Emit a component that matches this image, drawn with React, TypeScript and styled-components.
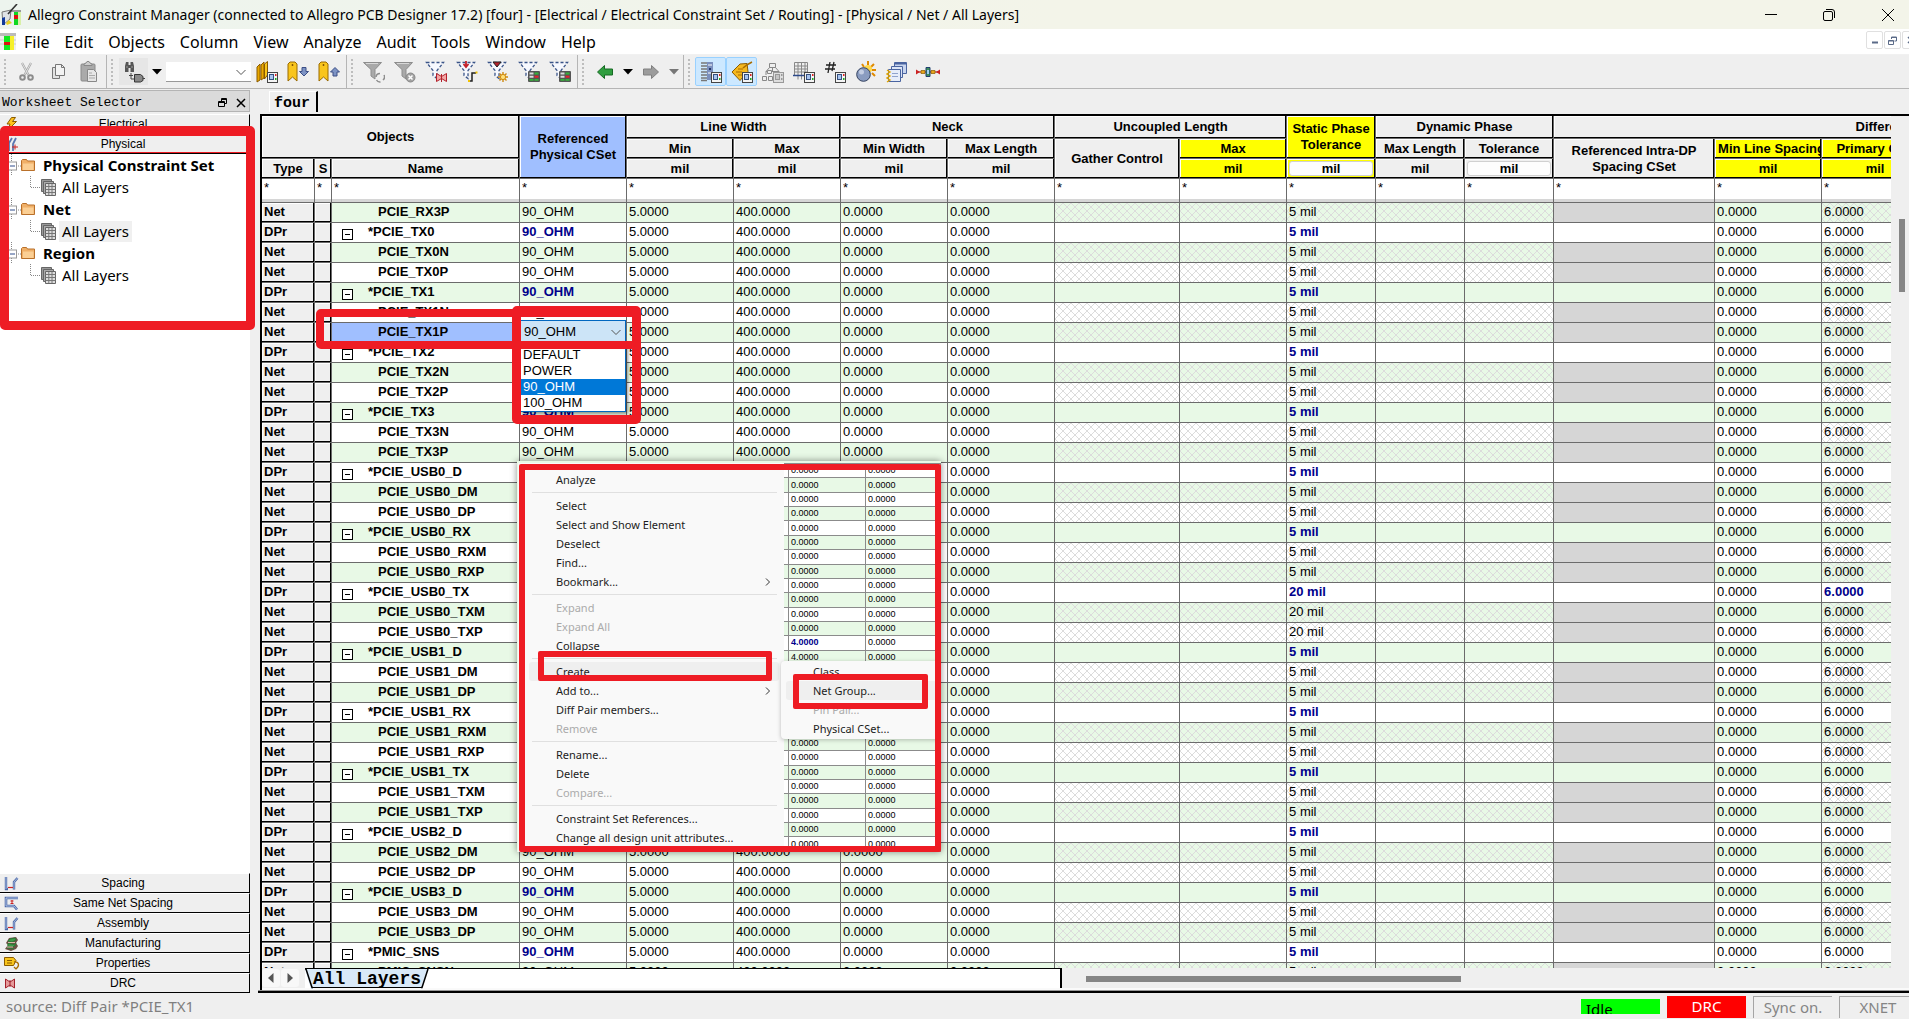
import React from "react";
import styled, { createGlobalStyle, css } from "styled-components";

const UI = `"Noto Sans", "Open Sans", sans-serif`;
const ARIAL = `"Liberation Sans", Arial, sans-serif`;
const MONO = `"Liberation Mono", "DejaVu Sans Mono", monospace`;

const C = {
  face: "#efefef",
  line: "#6b6b6b",
  green: "#e8f9e6",
  blue: "#a0bfff",
  navy: "#00008b",
  yellow: "#ffff00",
  red: "#ee1c24",
  grey: "#d6d6d6",
};

const Global = createGlobalStyle`
  *, *::before, *::after { box-sizing: border-box; }
  body { margin: 0; background: ${C.face}; color: #000; font: 15px/20px ${UI}; }
  button, select, input { font: inherit; color: inherit; margin: 0; padding: 0; border: 0; background: none; border-radius: 0; }
  ul { list-style: none; margin: 0; padding: 0; }
  svg { display: block; flex: none; }
`;

const Page = styled.div`
  position: relative;
  display: flex;
  flex-direction: column;
  height: 100vh;
  overflow: hidden;
`;

/* ---------- title and menu ---------- */

const TitleBar = styled.header`
  display: flex;
  align-items: center;
  height: 29px;
  flex: none;
  background: linear-gradient(90deg, #edf4ee, #f3f4e9 55%);
`;
const Title = styled.h1`
  flex: 1;
  margin: 0 0 0 7px;
  font: 14px/20px ${UI};
  white-space: nowrap;
`;
const WindowButton = styled.button`
  display: flex;
  align-items: center;
  justify-content: center;
  width: 58px;
  height: 29px;
  &:last-child { width: 51px; padding-left: 8px; }
`;
const MenuBar = styled.nav`
  display: flex;
  align-items: center;
  height: 26px;
  flex: none;
  background: #fff;
  border-bottom: 1px solid #f1f1f1;
`;
const MenuList = styled.ul`
  display: flex;
  flex: 1;
  gap: 15px;
  margin-left: 8px;
`;
const MenuButton = styled.button`
  font-size: 16px;
  line-height: 24px;
`;
const ChildButton = styled.button`
  display: flex;
  align-items: center;
  justify-content: center;
  width: 17px;
  height: 18px;
  margin: 0 1px 6px 0;
  border: 1px solid #e0e0e0;
  border-radius: 2px;
`;
const ChildButtons = styled.div`
  display: flex;
  width: 43px;
  overflow: hidden;
  padding-top: 3px;
  & > button { flex: none; }
`;

/* ---------- toolbar ---------- */

const ToolBar = styled.div`
  display: flex;
  height: 34px;
  flex: none;
  border-bottom: 1px solid #b5b5b5;
`;
const ToolGroup = styled.div<{ $last?: boolean }>`
  display: flex;
  align-items: center;
  padding-right: 2px;
  border-right: ${(p) => (p.$last ? "0" : "1px solid #b5b5b5")};
`;
const Grip = styled.span`
  width: 2px;
  height: 26px;
  margin: 0 5px 0 4px;
  background: repeating-linear-gradient(#bdbdbd 0 2px, transparent 2px 4px);
`;
const Tool = styled.button<{ $on?: boolean; $hover?: boolean }>`
  display: flex;
  align-items: center;
  justify-content: center;
  width: 31px;
  height: 29px;
  border: 1px solid ${(p) => (p.$on ? "#99d1ff" : "transparent")};
  border-radius: ${(p) => (p.$on ? "2px" : "0")};
  background: ${(p) => (p.$on ? "#cce8ff" : p.$hover ? "#e6e6e6" : "none")};
  background-clip: padding-box;
`;
const Caret = styled.button<{ $dim?: boolean }>`
  display: flex;
  justify-content: center;
  align-items: center;
  width: 15px;
  height: 29px;
  color: ${(p) => (p.$dim ? "#777" : "#000")};
`;
const SelectShell = styled.label`
  display: grid;
  align-items: center;
  & > * { grid-area: 1 / 1; }
  & > svg { justify-self: end; margin-right: 4px; pointer-events: none; }
`;
const FindSelect = styled.select`
  appearance: none;
  width: 85px;
  height: 20px;
  margin-left: 2px;
  background: #fff;
  border-bottom: 1px solid #999;
`;

/* ---------- work area ---------- */

const Work = styled.div`
  display: flex;
  flex: 1;
  min-height: 0;
`;
const Dock = styled.aside`
  display: flex;
  flex-direction: column;
  width: 250px;
  flex: none;
  padding-top: 1px;
`;
const DockHead = styled.div`
  display: flex;
  align-items: center;
  gap: 8px;
  height: 22px;
  margin-bottom: 2px;
  padding: 3px 3px 0 2px;
  border: 1px solid #b4b4b4;
  border-left: 0;
  background: #dadada;
  font: 13px/18px ${MONO};
`;
const DockTitle = styled.h2`
  flex: 1;
  margin: 0;
  font: inherit;
`;
const DockTab = styled.button<{ $active?: boolean }>`
  display: grid;
  grid-template-columns: 18px 1fr 24px;
  align-items: center;
  flex: none;
  height: 20px;
  padding-left: 3px;
  font: 12px/18px ${ARIAL};
  background: ${C.face};
  border-top: 1px solid #fff;
  border-right: 1px solid #000;
  border-bottom: 1px solid #000;
  box-shadow: ${(p) => (p.$active ? `inset 0 -1px ${C.red}, inset 0 1px ${C.red}` : "none")};
  svg { margin-left: 1px; }
`;
const Tree = styled.ul`
  flex: 1;
  min-height: 0;
  background: #fff;
`;
const TreeRow = styled.div<{ $child?: boolean }>`
  display: flex;
  align-items: center;
  gap: ${(p) => (p.$child ? "3px" : "5px")};
  height: 22px;
  padding-left: ${(p) => (p.$child ? "30px" : "8px")};
`;
const NodeMark = styled.span`
  display: flex;
  align-items: center;
`;
const TreeLabel = styled.button<{ $bold?: boolean; $on?: boolean }>`
  padding: 0 3px;
  font-size: 15px;
  line-height: 21px;
  font-weight: ${(p) => (p.$bold ? 700 : 400)};
  background: ${(p) => (p.$on ? "#f0f0f0" : "none")};
`;
const Main = styled.main`
  display: flex;
  flex-direction: column;
  flex: 1;
  min-width: 0;
  margin-left: 8px;
`;
const SheetTabs = styled.div`
  display: flex;
  align-items: flex-end;
  height: 25px;
  flex: none;
  padding-left: 11px;
`;
const SheetTab = styled.button`
  height: 21px;
  margin-bottom: 2px;
  padding: 3px 6px 0 4px;
  border-top: 1px solid #fff;
  border-left: 1px solid #fff;
  border-right: 2px solid #000;
  font: bold 15px/18px ${MONO};
`;
const Sheet = styled.section`
  display: flex;
  flex: 1;
  flex-direction: column;
  min-height: 0;
  margin-left: 2px;
  border-top: 2px solid #000;
  border-left: 2px solid #000;
`;
const SheetBody = styled.div`
  display: flex;
  flex: 1;
  min-height: 0;
`;
const GridView = styled.div`
  flex: 1;
  min-width: 0;
  overflow: hidden;
`;
const VScroll = styled.div`
  width: 18px;
  flex: none;
  padding: 103px 4px 0 8px;
`;
const VThumb = styled.div`
  height: 73px;
  background: #868686;
`;

/* ---------- grid ---------- */

const Grid = styled.table`
  width: 1992px;
  table-layout: fixed;
  border-collapse: separate;
  border-spacing: 0;
  font: 13px/17px ${ARIAL};
  background: #fff;
`;
const Head = styled.th<{ $tone?: "yellow" | "blue"; $start?: boolean }>`
  height: 20px;
  padding: 0 ${(p) => (p.$start ? "3px" : "2px")};
  overflow: hidden;
  line-height: 16px;
  text-align: ${(p) => (p.$start ? "left" : "center")};
  white-space: ${(p) => (p.$start ? "nowrap" : "normal")};
  background: ${(p) => (p.$tone === "yellow" ? C.yellow : p.$tone === "blue" ? C.blue : C.face)};
  border-right: 1px solid ${C.line};
  border-bottom: 1px solid ${C.line};
  box-shadow: inset -1px -1px #000, inset 1px 1px #fff;
`;
const GroupRow = styled.tr`
  height: 23px;
`;
const UnitButton = styled.button`
  display: block;
  width: 100%;
  height: 15px;
  font: bold 13px/14px ${ARIAL};
  background: #fdfdfd;
  border: 1px solid #d0d0d0;
  border-radius: 3px;
`;
const FilterCell = styled.td`
  height: 24px;
  padding: 0;
  vertical-align: top;
  border-right: 1px solid ${C.line};
  border-bottom: 1px solid ${C.line};
  box-shadow: inset 0 -3px ${C.grey};
`;
const FilterInput = styled.input`
  display: block;
  width: 100%;
  height: 17px;
  padding-left: 2px;
  background: none;
`;
const hatch = css`
  background-image:
    linear-gradient(45deg, transparent 46%, #dcdcdc 46% 54%, transparent 54%),
    linear-gradient(-45deg, transparent 46%, #dcdcdc 46% 54%, transparent 54%);
  background-size: 8px 8px;
`;
const Row = styled.tr<{ $green: boolean }>`
  background: ${(p) => (p.$green ? C.green : "#fff")};
`;
const Cell = styled.td<{ $hatch?: boolean; $set?: boolean; $locked?: boolean }>`
  position: relative;
  height: 20px;
  padding: 0 2px;
  vertical-align: top;
  white-space: nowrap;
  border-right: 1px solid ${C.line};
  border-bottom: 1px solid ${C.line};
  ${(p) => p.$hatch && hatch}
  ${(p) => p.$locked && `background: ${C.grey};`}
  ${(p) => p.$set && `font-weight: bold; color: ${C.navy};`}
`;
const KeyCell = styled(Cell)`
  font-weight: bold;
  background: ${C.face};
  box-shadow: inset -1px -1px #000, inset 1px 1px #fff;
`;
const NameCell = styled(Cell)<{ $picked?: boolean; $pair?: boolean }>`
  padding-left: ${(p) => (p.$pair ? "10px" : "46px")};
  font-weight: bold;
  background: ${(p) => (p.$picked ? C.blue : "none")};
`;
const NameLine = styled.div`
  display: flex;
  gap: 15px;
`;
const Fold = styled.button`
  display: flex;
  align-items: center;
  justify-content: center;
  width: 11px;
  height: 11px;
  margin-top: 6px;
  background: #fff;
  border: 1px solid #000;
  &::before { content: ""; width: 5px; height: 1px; background: #000; }
`;
const Editor = styled.div`
  position: absolute;
  z-index: 2;
  top: -3px;
  left: 0;
  right: 0;
  font-weight: 400;
`;
const EditSelect = styled.select`
  appearance: none;
  width: 100%;
  height: 23px;
  padding-left: 3px;
  background: #cce4f7;
  border: 1px solid #0067c0;
`;
const Options = styled.ul`
  padding-top: 3px;
  background: #fff;
  border: 1px solid #0067c0;
  box-shadow: 2px 2px 3px rgba(0, 0, 0, 0.4);
`;
const Option = styled.li<{ $on?: boolean }>`
  padding-left: 2px;
  line-height: 16px;
  color: ${(p) => (p.$on ? "#fff" : "#000")};
  background: ${(p) => (p.$on ? "#0078d7" : "none")};
`;

/* ---------- layer strip ---------- */

const Strip = styled.div`
  display: flex;
  height: 22px;
  flex: none;
  border-bottom: 2px solid #fafafa;
`;
const StripTabs = styled.div`
  display: flex;
  width: 50%;
  flex: none;
  max-width: 800px;
  border-right: 2px solid #000;
`;
const StripArrow = styled.button`
  display: flex;
  align-items: center;
  justify-content: center;
  width: 18px;
  height: 18px;
  margin: 1px 1px 0 0;
  color: #555;
  background: #f8f8f8;
  border-radius: 3px;
`;
const LayerRow = styled.div`
  display: flex;
  flex: 1;
  margin-left: 5px;
  background: #fff;
  border-top: 1px solid #000;
`;
const LayerTab = styled.button`
  display: flex;
  height: 19px;
  font: bold 18px/20px ${MONO};
`;
const LayerName = styled.span`
  height: 19px;
  background: #d9e9f8;
  border-bottom: 1px solid #000;
`;
const HScroll = styled.div`
  flex: 1;
  padding: 8px 8px 0 24px;
`;
const HThumb = styled.div`
  width: 46%;
  height: 6px;
  background: #868686;
`;
const SheetEnd = styled.div`
  height: 3px;
  flex: none;
  border-top: 1px solid #9a9a9a;
  border-bottom: 2px solid #000;
`;

/* ---------- status bar ---------- */

const Status = styled.footer`
  display: flex;
  align-items: flex-start;
  height: 26px;
  flex: none;
  gap: 7px;
  padding: 3px 0 0 6px;
`;
const StatusText = styled.span`
  flex: 1;
  line-height: 20px;
  color: #7f7f7f;
`;
const StatusBox = styled.span<{ $kind?: "idle" | "drc" }>`
  width: 79px;
  height: 22px;
  overflow: hidden;
  text-align: center;
  line-height: 20px;
  color: #858585;
  border: solid #a5a5a5;
  border-width: 1px 0 0 1px;
  ${(p) => p.$kind === "drc" && "background: #f00; color: #fff; border: 0;"}
  ${(p) =>
    p.$kind === "idle" &&
    "background: #0f0; color: #000; border: 0; height: 15px; margin-top: 3px; padding-left: 5px; text-align: left;"}
  &:last-child { width: 70px; padding-left: 7px; }
`;

/* ---------- floating clip of the context menu ---------- */

const Clip = styled.div`
  position: absolute;
  z-index: 3;
  left: 518px;
  top: 463px;
  width: 423px;
  height: 389px;
  overflow: hidden;
  background: #fff;
`;
const ClipShadow = styled.div`
  position: absolute;
  z-index: 2;
  left: 517px;
  top: 461px;
  width: 424px;
  height: 391px;
  background: ${C.green};
  box-shadow: 0 0 7px rgba(0, 0, 0, 0.45);
`;
const MiniTable = styled.table`
  position: absolute;
  top: 0;
  right: 0;
  width: 157px;
  height: 389px;
  table-layout: fixed;
  border-collapse: collapse;
  font: 9px/11px ${ARIAL};
  color: #000;
`;
const MiniCell = styled.td<{ $set?: boolean }>`
  padding: 0 2px;
  border: 1px solid #8b8b8b;
  ${(p) => p.$set && `font-weight: bold; color: ${C.navy};`}
`;
const MiniRow = styled.tr<{ $green: boolean }>`
  background: ${(p) => (p.$green ? C.green : "#fff")};
`;
const ContextMenu = styled.ul`
  width: 266px;
  height: 389px;
  padding: 7px 5px 0 11px;
  background: #f9f9f9;
  position: relative;
`;
const SubMenu = styled.ul`
  position: absolute;
  left: 263px;
  top: 198px;
  width: 165px;
  padding: 1px 4px 1px 5px;
  background: #f9f9f9;
  border-radius: 4px;
  box-shadow: 0 1px 4px rgba(0, 0, 0, 0.25);
`;
const MenuItem = styled.button<{ $hover?: boolean }>`
  display: flex;
  align-items: center;
  justify-content: space-between;
  width: 100%;
  height: 19px;
  padding: 0 8px 0 27px;
  font: 11px/18px ${UI};
  color: #1c1c1c;
  background: ${(p) => (p.$hover ? "#efefef" : "none")};
  border-radius: 3px;
  &:disabled { color: #ababab; }
`;
const Divider = styled.li`
  height: 1px;
  margin: 3px 2px 3px 3px;
  background: #e0e0e0;
`;
const Mark = styled.div<{ $x: number; $y: number; $w: number; $h: number; $t: number }>`
  position: absolute;
  z-index: 5;
  left: ${(p) => p.$x}px;
  top: ${(p) => p.$y}px;
  width: ${(p) => p.$w}px;
  height: ${(p) => p.$h}px;
  border: ${(p) => p.$t}px solid ${C.red};
  border-radius: ${(p) => (p.$t > 6 ? 5 : 2)}px;
  pointer-events: none;
`;

/* ---------- drawings ---------- */

const Icon = ({ children }: { children: React.ReactNode }) => (
  <svg width="22" height="22" viewBox="0 0 22 22" aria-hidden="true">
    {children}
  </svg>
);
const Badge = ({ grey }: { grey?: boolean }) => (
  <g>
    <rect x="11.5" y="11.5" width="10" height="10" fill={grey ? "#dedede" : "#f4f4f4"} stroke={grey ? "#999" : "#444"} />
    <rect x="13.5" y="13.5" width="4" height="5" fill={grey ? "#c5c5c5" : "#a8c4f0"} stroke={grey ? "#999" : "#35507f"} />
    <rect x="19" y="13" width="1.5" height="2" fill={grey ? "#999" : "#d22"} />
    <rect x="19" y="17" width="1.5" height="2" fill={grey ? "#999" : "#2a2"} />
  </g>
);
const SolidFunnel = () => (
  <g>
    <path d="M.5 1.500h18l-6.500 7v9.500l-4-3V8.500z" fill="#a9a9a9" stroke="#8d8d8d" />
    <path d="M3 2.500h12" stroke="#d8d8d8" />
  </g>
);
const DashFunnel = () => (
  <path d="M1.500 1.500h17l-6.500 8v8l-4-3v-5z" fill="#f7f9ff" stroke="#3a5488" strokeDasharray="3 2" strokeWidth="1.300" />
);
const GridBadge = () => (
  <g>
    <rect x="10" y="10" width="12" height="11" rx="1" fill="#555" />
    <path d="M11.500 11.500h4v2h-4zM11.500 14.700h4v2h-4z" fill="#ddd" />
    <path d="M16.500 11.500h4v2h-4zM11.500 18h4v1.800h-4zM16.500 18h4v1.800h-4z" fill="#35b23a" />
    <path d="M16.500 14.700h4v2h-4z" fill="#e8202a" />
  </g>
);
const Tag = ({ x, y = 1, h = 19 }: { x: number; y?: number; h?: number }) => (
  <path d={`M${x} ${y + 2}l2-2h5l2 2v${h - 2}l-4.500-4-4.500 4z`} fill="#f9c51b" stroke="#9a6a00" />
);
const Chevron = () => (
  <svg width="12" height="12" viewBox="0 0 12 12" fill="none" stroke="#555" aria-hidden="true">
    <path d="M1.500 4l4.500 4.500L10.500 4" />
  </svg>
);
const Down = () => (
  <svg width="10" height="6" viewBox="0 0 10 6" aria-hidden="true">
    <path d="M0 0h10L5 5.500z" fill="currentColor" />
  </svg>
);
const Arrow = ({ fill, stroke, flip }: { fill: string; stroke: string; flip?: boolean }) => (
  <svg width="16" height="16" viewBox="0 0 16 16" aria-hidden="true">
    <path d={flip ? "M15.500 8L8.500 1.500v3.500h-8v6h8v3.500z" : "M.5 8l7-6.500V5h8v6h-8v3.500z"} fill={fill} stroke={stroke} />
  </svg>
);

const CutIcon = () => (
  <Icon>
    <path d="M6 2l6.500 12M15 2L8.500 14" stroke="#a3a3a3" strokeWidth="2.200" />
    <path d="M6 2l6.500 12M15 2L8.500 14" stroke="#e2e2e2" strokeWidth="1" />
    <circle cx="6.500" cy="16.500" r="2.300" fill="none" stroke="#8c8c8c" strokeWidth="2" />
    <circle cx="14.500" cy="16.500" r="2.300" fill="none" stroke="#8c8c8c" strokeWidth="2" />
  </Icon>
);
const CopyIcon = () => (
  <Icon>
    <path d="M5.500 6.500h7v11h-7z" fill="#e2e2e2" stroke="#777" />
    <path d="M8.500 3.500h6l3 3v8h-9z" fill="#f3f3f3" stroke="#777" />
    <path d="M14.500 3.500v3h3" fill="none" stroke="#777" />
  </Icon>
);
const PasteIcon = () => (
  <Icon>
    <rect x="3" y="3" width="14" height="17" rx="1" fill="#aaa" stroke="#8a8a8a" />
    <path d="M6 4.500h8V3l-2-1-1-1.500H9L8 2 6 3z" fill="#ccc" stroke="#888" />
    <path d="M9.500 8.500h6l3 3v9h-9z" fill="#e6e6e6" stroke="#888" />
    <path d="M11 12h3M11 14.500h6M11 17h6" stroke="#aaa" />
  </Icon>
);
const FindIcon = () => (
  <Icon>
    <path d="M2 11V5l1-4h2.500v3h2V1H10l1 4v6H7.500V7h-2v4z" fill="#555" />
    <path d="M3 6h2M8 6h2" stroke="#999" />
    <path d="M6 14.500h4M8 12v6h3" stroke="#444" fill="none" />
    <path d="M11.500 13.500h6l2.500 2v4l-2.500 1.500h-6z" fill="#888" stroke="#333" />
    <path d="M20 17.500h2" stroke="#444" />
  </Icon>
);
const MarksIcon = () => (
  <Icon>
    <path d="M1 6l3-3v16l-3 2zM5 4l3-3v16l-3 2z" fill="#e9a800" stroke="#8a5b00" />
    <path d="M8.500 3l3-2.500V14l-3 4z" fill="#f9c51b" stroke="#8a5b00" />
    <Badge />
  </Icon>
);
const MarkDownIcon = () => (
  <Icon>
    <Tag x={1} />
    <circle cx="5.500" cy="4" r=".9" fill="#7a4c00" />
    <path d="M15 6.500h4v4h2.500L17 15l-4.500-4.500H15z" fill="#7d93c4" stroke="#3c4f86" />
  </Icon>
);
const MarkUpIcon = () => (
  <Icon>
    <Tag x={1} />
    <circle cx="5.500" cy="4" r=".9" fill="#7a4c00" />
    <path d="M15 15h4v-4h2.500L17 6.500 12.500 11H15z" fill="#7d93c4" stroke="#3c4f86" />
  </Icon>
);
const FunnelRefresh = () => (
  <Icon>
    <SolidFunnel />
    <path d="M13 16a4 4 0 0 1 4-3.500M21 14a4 4 0 0 1-1 5M17.500 21a4 4 0 0 1-4-2" fill="none" stroke="#8d8d8d" strokeWidth="1.500" />
  </Icon>
);
const FunnelClear = () => (
  <Icon>
    <SolidFunnel />
    <circle cx="16.500" cy="16.500" r="4.500" fill="#a2a2a2" stroke="#888" />
    <path d="M14.500 14.500l4 4M18.500 14.500l-4 4" stroke="#fff" strokeWidth="1.500" />
  </Icon>
);
const FunnelDrc = () => (
  <Icon>
    <DashFunnel />
    <path d="M11.500 12.500l5 3 5-3v8l-5-3-5 3z" fill="#f2a5a5" stroke="#b3202a" />
    <path d="M16.500 13v8" stroke="#b3202a" />
  </Icon>
);
const FunnelNet = () => (
  <Icon>
    <DashFunnel />
    <path d="M10 0v5M7.500 3L10 6l2.500-3" fill="none" stroke="#c3202a" strokeWidth="1.800" />
    <path d="M13 20h3v-8h4" fill="none" stroke="#222" strokeWidth="1.500" />
    <path d="M12 19h2v2h-2zM19.500 10.500h2v2h-2z" fill="#f2c200" />
  </Icon>
);
const FunnelNew = () => (
  <Icon>
    <DashFunnel />
    <path d="M6 1h8l-4 5z" fill="#b3202a" stroke="#222" />
    <path d="M16 11v10M11 16h10M12.500 12.500l7 7M19.500 12.500l-7 7" stroke="#d08a10" strokeWidth="1.400" />
    <circle cx="16" cy="16" r="2.600" fill="#ffe07a" stroke="#d08a10" />
  </Icon>
);
const FunnelGrid = () => (
  <Icon>
    <DashFunnel />
    <GridBadge />
  </Icon>
);
const ListBadgeIcon = () => (
  <Icon>
    <path d="M1 2h6M1 5h6M1 8h6M1 11h6M1 14h6M1 17h6M1 19.500h6" stroke="#777" strokeWidth="1.600" />
    <path d="M7 1h6v18H7z" fill="#7b8fbd" />
    <path d="M8 4h4M8 12h3" stroke="#fff" />
    <path d="M9 7h2v2H9z" fill="#24376b" />
    <Badge />
  </Icon>
);
const LabelBadgeIcon = () => (
  <Icon>
    <path d="M1 11l8-8 7-.5 1 8-8 9z" fill="#f5b81e" stroke="#8a5b00" />
    <path d="M12 7c2-2 5-4 9-6" stroke="#a86c00" strokeWidth="1.600" fill="none" />
    <path d="M5 11h6M7 8h5M7 14h4" stroke="#a86c00" />
    <Badge />
  </Icon>
);
const TreeBadgeIcon = () => (
  <Icon>
    <path d="M10.500 6v4M4 14v-3.500h13V14M4 10.500L8 6M17 10.500L13 6" fill="none" stroke="#888" />
    <path d="M7.500 2.500h6v4h-6zM5.500 9.500h4v3h-4zM.5 15.500h4v4h-4zM6.500 15.500h4v4h-4z" fill="#eee" stroke="#888" />
    <Badge grey />
  </Icon>
);
const TableBadgeIcon = () => (
  <Icon>
    <path d="M1.500 1.500h13v13h-13zM1.500 5h13M1.500 8h13M1.500 11h13M5 1.500v17M8.500 1.500v17M12 1.500v13" fill="none" stroke="#888" />
    <path d="M0 14.500h12" stroke="#2d4a8a" strokeWidth="1.500" />
    <Badge />
  </Icon>
);
const HashBadgeIcon = () => (
  <Icon>
    <path d="M6 1L4 12M10 1L8 10M2 4h10M1 8h10" stroke="#222" strokeWidth="1.300" />
    <Badge />
  </Icon>
);
const SunIcon = () => (
  <Icon>
    <path d="M13 0v4M19 3l-3 3M21 9h-4M20 15l-3-3M7 3l2 3" stroke="#e08a00" strokeWidth="2" />
    <circle cx="13" cy="8" r="4" fill="#ffd84a" />
    <circle cx="8.500" cy="13.500" r="6.800" fill="#8a9cc0" stroke="#33415f" />
    <circle cx="6.500" cy="11" r="2.500" fill="#c3cde2" />
  </Icon>
);
const WindowsIcon = () => (
  <Icon>
    <path d="M8.500 1.500h12v11h-12z" fill="#c8d5ef" stroke="#4a64a0" />
    <path d="M9 2.500h11" stroke="#4a64a0" strokeWidth="2" />
    <path d="M5.500 5.500h11v11h-11z" fill="#dce5f6" stroke="#4a64a0" />
    <path d="M2.500 8.500h12v12h-12z" fill="#e6edf9" stroke="#4a64a0" />
    <path d="M6 12.500h6M6 15.500h6" stroke="#8fa3cc" />
    <path d="M1 9l3 2-3 2 3 2-3 2 3 2-3 2" stroke="#e0a400" fill="none" strokeWidth="1.400" />
  </Icon>
);
const LinkIcon = () => (
  <svg width="26" height="22" viewBox="0 0 26 22" aria-hidden="true">
    <path d="M2 11h22" stroke="#a33" strokeWidth="1.200" />
    <path d="M1 8.500L5 11l-4 2.500zM25 8.500L21 11l4 2.500z" fill="#c22" />
    <path d="M6 9.500h4v3H6zM16 9.500h4v3h-4z" fill="#e8a51c" stroke="#8a5b00" strokeWidth=".7" />
    <path d="M11 6.500h4v9h-4z" fill="#3f8f5c" stroke="#1f3f6f" />
    <path d="M12 9h2v4h-2z" fill="#9fd0f0" />
  </svg>
);
const AppIcon = () => (
  <svg width="21" height="22" viewBox="0 0 21 22" aria-hidden="true">
    <path d="M10 7h12v14H10z" fill="#eee" />
    <path d="M10 6h12v2H10z" fill="#999" />
    <path d="M14 8h4v13h-4z" fill="#10d820" />
    <path d="M14 11h4v4h-4z" fill="#e01010" />
    <path d="M18 8h3v13h-3z" fill="#d8f0a8" />
    <path d="M2 8l9-2-1 9-7 6z" fill="#dfe3e6" stroke="#777" />
    <path d="M2 14l3-1v8H2z" fill="#123a9a" />
    <path d="M6 19l3-3 3 3-5 2z" fill="#e8d020" />
    <path d="M17 0L8 10" stroke="#333" strokeWidth="1.600" />
  </svg>
);
const DocIcon = () => (
  <svg width="16" height="17" viewBox="0 0 16 17" aria-hidden="true">
    <path d="M0 0h16v3H0z" fill="#bbb" />
    <path d="M0 3h16v14H0z" fill="#eee" />
    <path d="M4 3h6v14H4z" fill="#10e820" />
    <path d="M4 9h6v3H4z" fill="#e01010" />
    <path d="M10 3h4v14h-4z" fill="#f6f02a" />
    <path d="M0 7h4M0 11h4M14 7h2M14 11h2" stroke="#ccc" />
  </svg>
);
const Bolt = () => (
  <svg width="14" height="14" viewBox="0 0 14 14" aria-hidden="true">
    <path d="M7.500.5h4L8.500 4.500h4L4 13l2-6H3z" fill="#ffc21a" stroke="#8a5b00" />
  </svg>
);
const PhysicalIcon = () => (
  <svg width="14" height="16" viewBox="0 0 14 16" aria-hidden="true">
    <path d="M5 15V7l3-5M9 15V8l3-6" fill="none" stroke="#5a76b0" strokeWidth="1.800" />
    <path d="M8 11h6M11 8.500v5" stroke="#c22" />
  </svg>
);
const SpacingIcon = () => (
  <svg width="15" height="15" viewBox="0 0 15 15" aria-hidden="true">
    <path d="M2 1v12h2M13.500 2L10 6v7.500" fill="none" stroke="#4d6aa8" strokeWidth="2.400" />
    <path d="M2 1v12M13.500 2L10 6v7" fill="none" stroke="#b9c9ea" strokeWidth=".8" />
    <path d="M4 11.500h5" stroke="#c22" strokeWidth="1.200" />
  </svg>
);
const SameNetIcon = () => (
  <svg width="15" height="15" viewBox="0 0 15 15" aria-hidden="true">
    <path d="M14 2H2v8h8l3 3.500" fill="none" stroke="#4d6aa8" strokeWidth="2.600" />
    <path d="M14 2H2v8h8l3 3.500" fill="none" stroke="#b9c9ea" strokeWidth=".9" />
    <path d="M8 4v4M6.500 5h3M6.500 7.500h3" stroke="#c22" />
  </svg>
);
const FactoryIcon = () => (
  <svg width="15" height="15" viewBox="0 0 15 15" aria-hidden="true">
    <path d="M5 2l7-1 2 3-2 3 2 3-2 3-5 2-6-2 3-4-2-2z" fill="#6b5044" />
    <path d="M6 3l5-1 1 2-4 2-4-1zM4 7.500l6 1 2-1-2 3H4zM3 12l7 1" fill="#3f9a48" stroke="#2c7a36" />
    <path d="M4 6.500h7M3 11h6" stroke="#d9b8a8" />
  </svg>
);
const PropertyIcon = () => (
  <svg width="16" height="15" viewBox="0 0 16 15" aria-hidden="true">
    <path d="M.5 1.500h9l2.500 3-2.500 5h-9z" fill="#f9c51b" stroke="#8a5b00" />
    <path d="M3 4.500h5M3 7h5" stroke="#8a5b00" />
    <path d="M10 6c5-1 6 4 2 7l-2-2" fill="none" stroke="#a86c00" strokeWidth="1.300" />
  </svg>
);
const DrcIcon = () => (
  <svg width="12" height="13" viewBox="0 0 12 13" aria-hidden="true">
    <path d="M1.500 2L6 5l4.500-3v9L6 8l-4.500 3z" fill="#e59a9a" stroke="#a3202a" />
    <path d="M6 3v7" stroke="#a3202a" />
  </svg>
);
const Folder = () => (
  <svg width="14" height="12" viewBox="0 0 14 12" aria-hidden="true">
    <path d="M.5 11.500V1.500l1-1h4l1 1.500h7v9.500z" fill="#f0b068" stroke="#b9702a" />
    <path d="M2 4.500h10.500V11H2z" fill="#fbcf94" />
  </svg>
);
const NodeBox = () => (
  <svg width="13" height="22" viewBox="0 0 13 22" aria-hidden="true">
    <path d="M3.500 0v22M8 12h5" stroke="#888" strokeDasharray="1 1" fill="none" />
    <rect x=".5" y="8" width="8" height="8" fill="#fff" stroke="#999" />
    <path d="M2 12h5" stroke="#2f4c8c" />
  </svg>
);
const Sheets = () => (
  <svg width="26" height="22" viewBox="0 0 26 22" aria-hidden="true">
    <path d="M.5 0v11.500H10" stroke="#888" strokeDasharray="1 1" fill="none" />
    <path d="M11.500 3.500h10v12h-10z" fill="#999" stroke="#666" />
    <path d="M13.500 5.500h10v12h-10z" fill="#aaa" stroke="#666" />
    <path d="M15.500 7.500h10v12h-10z" fill="#ddd" stroke="#666" />
    <path d="M15.500 10.500h10M15.500 13.500h10M15.500 16.500h10M18.800 8v11M22 8v11" stroke="#777" />
  </svg>
);
const SubArrow = () => (
  <svg width="6" height="8" viewBox="0 0 6 8" fill="none" stroke="#333" aria-hidden="true">
    <path d="M1 .5L4.500 4 1 7.500" />
  </svg>
);

/* ---------- data ---------- */

const MENUS = ["File", "Edit", "Objects", "Column", "View", "Analyze", "Audit", "Tools", "Window", "Help"];

const WIDTHS = [53, 17, 188, 107, 107, 107, 107, 107, 125, 107, 89, 89, 89, 161, 107, 107, 325];

const COLUMN_NAMES = [
  "Type", "S", "Name", "Referenced Physical CSet", "Line width min", "Line width max", "Neck min width",
  "Neck max length", "Gather control", "Uncoupled max", "Static phase", "Dynamic max length",
  "Dynamic tolerance", "Intra-DP Spacing CSet", "Min line spacing", "Primary gap",
];

type Net = { name: string; pair: boolean; phase: string; ownGap?: boolean };

const pair = (base: string, ends: string[], phase = "5 mil"): Net[] => [
  { name: `*${base}`, pair: true, phase, ownGap: phase !== "5 mil" },
  ...ends.map((e) => ({ name: base + e, pair: false, phase })),
];

const NETS: Net[] = [
  { name: "PCIE_RX3P", pair: false, phase: "5 mil" },
  ...["0", "1", "2", "3"].flatMap((n) => pair(`PCIE_TX${n}`, ["N", "P"])),
  ...["0", "1"].flatMap((n) => [
    ...pair(`PCIE_USB${n}_D`, ["M", "P"]),
    ...pair(`PCIE_USB${n}_RX`, ["M", "P"]),
    ...pair(`PCIE_USB${n}_TX`, ["M", "P"], n === "0" ? "20 mil" : "5 mil"),
  ]),
  ...["2", "3"].flatMap((n) => pair(`PCIE_USB${n}_D`, ["M", "P"])),
  ...pair("PMIC_SNS", ["N"]),
];

const CSETS = ["DEFAULT", "POWER", "90_OHM", "100_OHM"];

const TREE = [
  { label: "Physical Constraint Set", on: false },
  { label: "Net", on: true },
  { label: "Region", on: false },
];

const CONTEXT: { label: string; off?: boolean; more?: boolean; hover?: boolean }[][] = [
  [{ label: "Analyze" }],
  [{ label: "Select" }, { label: "Select and Show Element" }, { label: "Deselect" }, { label: "Find..." }, { label: "Bookmark...", more: true }],
  [{ label: "Expand", off: true }, { label: "Expand All", off: true }, { label: "Collapse" }],
  [{ label: "Create", hover: true }, { label: "Add to...", more: true }, { label: "Diff Pair members..." }, { label: "Remove", off: true }],
  [{ label: "Rename..." }, { label: "Delete" }, { label: "Compare...", off: true }],
  [{ label: "Constraint Set References..." }, { label: "Change all design unit attributes..." }],
];

const FILTER_TOOLS: [string, () => React.JSX.Element][] = [
  ["Refresh filter", FunnelRefresh],
  ["Clear filter", FunnelClear],
  ["Filter DRC", FunnelDrc],
  ["Filter nets", FunnelNet],
  ["New filter", FunnelNew],
  ["Filter rows", FunnelGrid],
  ["Filter columns", FunnelGrid],
];
const VIEW_TOOLS: [string, () => React.JSX.Element, boolean][] = [
  ["Worksheet selector", ListBadgeIcon, true],
  ["Object labels", LabelBadgeIcon, true],
  ["Hierarchy", TreeBadgeIcon, false],
  ["Table", TableBadgeIcon, false],
  ["Number format", HashBadgeIcon, false],
  ["Analysis modes", SunIcon, false],
  ["Worksheets", WindowsIcon, false],
  ["Topology", LinkIcon, false],
];
const LOWER_TABS: [string, () => React.JSX.Element][] = [
  ["Spacing", SpacingIcon],
  ["Same Net Spacing", SameNetIcon],
  ["Assembly", SpacingIcon],
  ["Manufacturing", FactoryIcon],
  ["Properties", PropertyIcon],
  ["DRC", DrcIcon],
];

/* ---------- parts ---------- */

const CSetEditor = () => (
  <Editor>
    <SelectShell>
      <EditSelect aria-label="Referenced Physical CSet" defaultValue="90_OHM">
        {CSETS.map((c) => (
          <option key={c}>{c}</option>
        ))}
      </EditSelect>
      <Chevron />
    </SelectShell>
    <Options role="listbox" aria-label="Physical CSets">
      {CSETS.map((c) => (
        <Option key={c} role="option" aria-selected={c === "90_OHM"} $on={c === "90_OHM"}>
          {c}
        </Option>
      ))}
    </Options>
  </Editor>
);

const NetRow = ({ net, index }: { net: Net; index: number }) => {
  const picked = net.name === "PCIE_TX1P";
  const h = !net.pair;
  return (
    <Row $green={index % 2 === 0}>
      <KeyCell>{net.pair ? "DPr" : "Net"}</KeyCell>
      <KeyCell />
      <NameCell $picked={picked} $pair={net.pair}>
        {net.pair ? (
          <NameLine>
            <Fold aria-label={`Collapse ${net.name}`} />
            {net.name}
          </NameLine>
        ) : (
          net.name
        )}
      </NameCell>
      <Cell $set={net.pair}>{picked ? <CSetEditor /> : "90_OHM"}</Cell>
      <Cell>5.0000</Cell>
      <Cell>400.0000</Cell>
      <Cell>0.0000</Cell>
      <Cell>0.0000</Cell>
      <Cell $hatch={h} />
      <Cell $hatch={h} />
      <Cell $hatch={h} $set={net.pair}>{net.phase}</Cell>
      <Cell $hatch={h} />
      <Cell $hatch={h} />
      <Cell $locked={h} />
      <Cell>0.0000</Cell>
      <Cell $hatch={h} $set={net.ownGap}>6.0000</Cell>
      <Cell />
    </Row>
  );
};

const ConstraintGrid = () => (
  <Grid>
    <colgroup>
      {WIDTHS.map((w, i) => (
        <col key={i} width={w} />
      ))}
    </colgroup>
    <thead>
      <GroupRow>
        <Head colSpan={3} rowSpan={2}>Objects</Head>
        <Head rowSpan={3} $tone="blue">Referenced Physical CSet</Head>
        <Head colSpan={2}>Line Width</Head>
        <Head colSpan={2}>Neck</Head>
        <Head colSpan={2}>Uncoupled Length</Head>
        <Head rowSpan={2} $tone="yellow">Static Phase Tolerance</Head>
        <Head colSpan={2}>Dynamic Phase</Head>
        <Head colSpan={4}>Differential Pair</Head>
      </GroupRow>
      <tr>
        <Head>Min</Head>
        <Head>Max</Head>
        <Head>Min Width</Head>
        <Head>Max Length</Head>
        <Head rowSpan={2}>Gather Control</Head>
        <Head $tone="yellow">Max</Head>
        <Head>Max Length</Head>
        <Head>Tolerance</Head>
        <Head rowSpan={2}>Referenced Intra-DP Spacing CSet</Head>
        <Head $tone="yellow" $start>Min Line Spacing</Head>
        <Head $tone="yellow">Primary Gap</Head>
        <Head />
      </tr>
      <tr>
        <Head>Type</Head>
        <Head>S</Head>
        <Head>Name</Head>
        <Head>mil</Head>
        <Head>mil</Head>
        <Head>mil</Head>
        <Head>mil</Head>
        <Head $tone="yellow">mil</Head>
        <Head $tone="yellow"><UnitButton>mil</UnitButton></Head>
        <Head>mil</Head>
        <Head><UnitButton>mil</UnitButton></Head>
        <Head $tone="yellow">mil</Head>
        <Head $tone="yellow">mil</Head>
        <Head />
      </tr>
      <tr>
        {COLUMN_NAMES.map((n) => (
          <FilterCell key={n}>
            <FilterInput aria-label={`Filter ${n}`} defaultValue="*" />
          </FilterCell>
        ))}
        <FilterCell />
      </tr>
    </thead>
    <tbody>
      {NETS.map((net, i) => (
        <NetRow key={net.name} net={net} index={i} />
      ))}
    </tbody>
  </Grid>
);

const MenuClip = () => (
  <>
    <ClipShadow />
    <Clip>
      <MiniTable>
        <colgroup>
          <col width="5" />
          <col width="77" />
          <col width="75" />
        </colgroup>
        <tbody>
          {Array.from({ length: 27 }, (_, i) => (
            <MiniRow key={i} $green={i % 2 === 1}>
              <MiniCell />
              <MiniCell $set={i === 12}>{i === 12 || i === 13 ? "4.0000" : "0.0000"}</MiniCell>
              <MiniCell>0.0000</MiniCell>
            </MiniRow>
          ))}
        </tbody>
      </MiniTable>
      <ContextMenu>
        {CONTEXT.map((group, g) => (
          <React.Fragment key={g}>
            {g > 0 && <Divider role="separator" />}
            {group.map((item) => (
              <li key={item.label}>
                <MenuItem disabled={item.off} $hover={item.hover}>
                  {item.label}
                  {item.more && <SubArrow />}
                </MenuItem>
              </li>
            ))}
          </React.Fragment>
        ))}
      </ContextMenu>
      <SubMenu>
        <li><MenuItem>Class...</MenuItem></li>
        <li><MenuItem $hover>Net Group...</MenuItem></li>
        <li><MenuItem disabled>Pin Pair...</MenuItem></li>
        <li><MenuItem>Physical CSet...</MenuItem></li>
      </SubMenu>
    </Clip>
    <Mark $x={519} $y={464} $w={422} $h={388} $t={6} />
    <Mark $x={538} $y={651} $w={234} $h={30} $t={6} />
    <Mark $x={793} $y={674} $w={135} $h={35} $t={6} />
  </>
);

export default function App() {
  return (
    <Page>
      <Global />
      <TitleBar>
        <AppIcon />
        <Title>
          Allegro Constraint Manager (connected to Allegro PCB Designer 17.2) [four] - [Electrical / Electrical Constraint Set / Routing] - [Physical / Net / All Layers]
        </Title>
        <WindowButton aria-label="Minimize">
          <svg width="12" height="12" viewBox="0 0 12 12"><path d="M0 5.500h12" stroke="#000" /></svg>
        </WindowButton>
        <WindowButton aria-label="Restore">
          <svg width="12" height="12" viewBox="0 0 12 12" fill="none" stroke="#000">
            <rect x=".5" y="2.500" width="9" height="9" rx="1.500" />
            <path d="M3 .5h6a2.500 2.500 0 0 1 2.500 2.500v6" />
          </svg>
        </WindowButton>
        <WindowButton aria-label="Close">
          <svg width="12" height="12" viewBox="0 0 12 12" stroke="#000"><path d="M0 0l12 12M12 0L0 12" /></svg>
        </WindowButton>
      </TitleBar>
      <MenuBar>
        <DocIcon />
        <MenuList>
          {MENUS.map((m) => (
            <li key={m}><MenuButton>{m}</MenuButton></li>
          ))}
        </MenuList>
        <ChildButtons>
          <ChildButton aria-label="Minimize sheet">
            <svg width="8" height="8" viewBox="0 0 8 8"><path d="M1 6.500h6" stroke="#5b6b88" strokeWidth="2" /></svg>
          </ChildButton>
          <ChildButton aria-label="Restore sheet">
            <svg width="9" height="9" viewBox="0 0 9 9" fill="none" stroke="#5b6b88">
              <path d="M3.500 3V1h5v4h-2M3 1.500h5.500M.5 4.500h5v4h-5zM.5 5h5" />
            </svg>
          </ChildButton>
          <ChildButton aria-label="Close sheet">
            <svg width="8" height="8" viewBox="0 0 8 8"><path d="M1 1l6 6M7 1L1 7" stroke="#5b6b88" strokeWidth="1.500" /></svg>
          </ChildButton>
        </ChildButtons>
      </MenuBar>
      <ToolBar>
        <ToolGroup>
          <Grip />
          <Tool aria-label="Cut"><CutIcon /></Tool>
          <Tool aria-label="Copy"><CopyIcon /></Tool>
          <Tool aria-label="Paste"><PasteIcon /></Tool>
        </ToolGroup>
        <ToolGroup>
          <Grip />
          <Tool aria-label="Find" $hover><FindIcon /></Tool>
          <Caret aria-label="Find options"><Down /></Caret>
          <SelectShell>
            <FindSelect aria-label="Find what"><option /></FindSelect>
            <Chevron />
          </SelectShell>
          <Tool aria-label="Bookmarks"><MarksIcon /></Tool>
          <Tool aria-label="Next bookmark"><MarkDownIcon /></Tool>
          <Tool aria-label="Previous bookmark"><MarkUpIcon /></Tool>
        </ToolGroup>
        <ToolGroup>
          <Grip />
          {FILTER_TOOLS.map(([label, Glyph]) => (
            <Tool key={label} aria-label={label}><Glyph /></Tool>
          ))}
        </ToolGroup>
        <ToolGroup>
          <Grip />
          <Tool aria-label="Back"><Arrow fill="#2f9e3f" stroke="#176a24" /></Tool>
          <Caret aria-label="Back history"><Down /></Caret>
          <Tool aria-label="Forward"><Arrow fill="#9c9c9c" stroke="#808080" flip /></Tool>
          <Caret aria-label="Forward history" $dim><Down /></Caret>
        </ToolGroup>
        <ToolGroup $last>
          <Grip />
          {VIEW_TOOLS.map(([label, Glyph, on]) => (
            <Tool key={label} aria-label={label} $on={on}><Glyph /></Tool>
          ))}
        </ToolGroup>
      </ToolBar>
      <Work>
        <Dock>
          <DockHead>
            <DockTitle>Worksheet Selector</DockTitle>
            <button aria-label="Float panel">
              <svg width="10" height="10" viewBox="0 0 10 10" fill="none" stroke="#000">
                <path d="M3.500 3V.5h5v5H7M3 1.500h6M.5 3.500h6v5h-6zM.5 4.500h6" />
              </svg>
            </button>
            <button aria-label="Close panel">
              <svg width="10" height="10" viewBox="0 0 10 10" stroke="#000" strokeWidth="1.500"><path d="M1 1l8 8M9 1L1 9" /></svg>
            </button>
          </DockHead>
          <DockTab><Bolt /><span>Electrical</span></DockTab>
          <DockTab $active><PhysicalIcon /><span>Physical</span></DockTab>
          <Tree>
            {TREE.map((n) => (
              <li key={n.label}>
                <TreeRow>
                  <NodeMark>
                    <NodeBox />
                    <Folder />
                  </NodeMark>
                  <TreeLabel $bold>{n.label}</TreeLabel>
                </TreeRow>
                <TreeRow $child>
                  <Sheets />
                  <TreeLabel $on={n.on}>All Layers</TreeLabel>
                </TreeRow>
              </li>
            ))}
          </Tree>
          {LOWER_TABS.map(([label, Glyph]) => (
            <DockTab key={label}><Glyph /><span>{label}</span></DockTab>
          ))}
        </Dock>
        <Main>
          <SheetTabs><SheetTab>four</SheetTab></SheetTabs>
          <Sheet>
            <SheetBody>
              <GridView><ConstraintGrid /></GridView>
              <VScroll><VThumb /></VScroll>
            </SheetBody>
            <Strip>
              <StripTabs>
                <StripArrow aria-label="Previous layer tab">
                  <svg width="6" height="10" viewBox="0 0 6 10"><path d="M5.500 0v10L0 5z" fill="currentColor" /></svg>
                </StripArrow>
                <StripArrow aria-label="Next layer tab">
                  <svg width="6" height="10" viewBox="0 0 6 10"><path d="M.5 0v10L6 5z" fill="currentColor" /></svg>
                </StripArrow>
                <LayerRow>
                  <LayerTab>
                    <svg width="8" height="20" viewBox="0 0 8 20">
                      <path d="M0 0h8v20H6z" fill="#d9e9f8" />
                      <path d="M0 0h1l6 18.500H8" fill="none" stroke="#000" strokeWidth="1.500" />
                    </svg>
                    <LayerName>All Layers</LayerName>
                    <svg width="8" height="20" viewBox="0 0 8 20">
                      <path d="M0 0h7L1 19H0z" fill="#d9e9f8" />
                      <path d="M7 0L1 18.500H0" fill="none" stroke="#000" strokeWidth="1.500" />
                    </svg>
                  </LayerTab>
                </LayerRow>
              </StripTabs>
              <HScroll><HThumb /></HScroll>
            </Strip>
          </Sheet>
          <SheetEnd />
        </Main>
      </Work>
      <Status>
        <StatusText>source: Diff Pair *PCIE_TX1</StatusText>
        <StatusBox $kind="idle">Idle</StatusBox>
        <StatusBox $kind="drc">DRC</StatusBox>
        <StatusBox>Sync on.</StatusBox>
        <StatusBox>XNET</StatusBox>
      </Status>
      <MenuClip />
      <Mark $x={0} $y={126} $w={255} $h={204} $t={9} />
      <Mark $x={316} $y={309} $w={324} $h={40} $t={8} />
      <Mark $x={512} $y={306} $w={129} $h={118} $t={9} />
    </Page>
  );
}
